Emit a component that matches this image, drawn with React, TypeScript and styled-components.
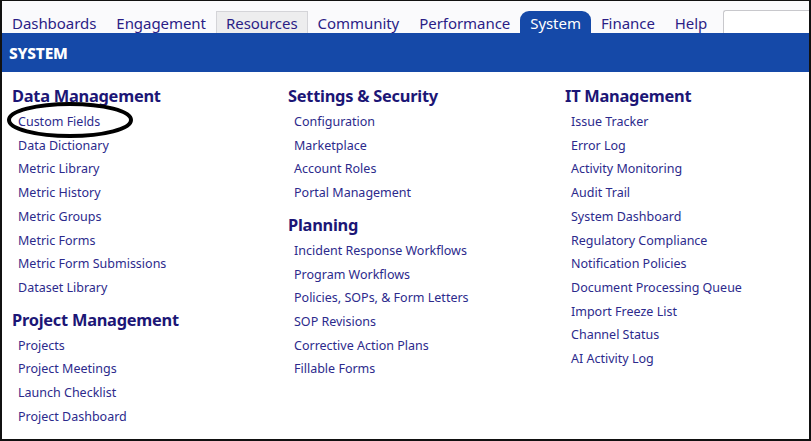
import * as React from 'react';
import styled, { createGlobalStyle } from 'styled-components';

const GlobalStyle = createGlobalStyle`
    html, body {
        margin: 0;
        padding: 0;
        background: #ffffff;
    }
    body {
        font-family: "Noto Sans", "Open Sans", sans-serif;
    }
`;

const Frame = styled.div`
    position: relative;
    width: 811px;
    height: 441px;
    box-sizing: border-box;
    border-style: solid;
    border-color: #111111;
    border-width: 1px 2px 2px 2px;
    background: #ffffff;
    overflow: hidden;
`;

const TopNav = styled.div`
    display: flex;
    align-items: flex-end;
    height: 32px;
    background: #fafafc;
`;

const NavTab = styled.div<{ $state?: 'hover' | 'active' }>`
    height: 22px;
    box-sizing: border-box;
    padding: 1px 9px 0;
    font-size: 15px;
    line-height: 21px;
    color: ${p => (p.$state === 'active' ? '#ffffff' : '#2b1d86')};
    background: ${p =>
        p.$state === 'active' ? '#1549a8' : p.$state === 'hover' ? '#ededee' : 'transparent'};
    border: 1px solid ${p => (p.$state === 'hover' ? '#d4d4d8' : 'transparent')};
    border-bottom: none;
    border-radius: ${p => (p.$state === 'active' ? '9px 9px 0 0' : '0')};
    white-space: nowrap;
    letter-spacing: -0.05px;
    user-select: none;
`;

const Search = styled.input`
    margin-left: 6px;
    flex: 1;
    height: 23px;
    box-sizing: border-box;
    border: 1px solid #c8c8cc;
    border-right: none;
    border-bottom: none;
    border-radius: 3px 0 0 0;
    background: #ffffff;
    outline: none;
`;

const Banner = styled.div`
    height: 39px;
    display: flex;
    align-items: center;
    padding-left: 7px;
    background: #1549a8;
    color: #ffffff;
    font-size: 15.5px;
    font-weight: 800;
    letter-spacing: -0.2px;
`;

const Columns = styled.div`
    display: grid;
    grid-template-columns: 276px 277px 1fr;
    padding: 11px 0 0 10px;
`;

const Column = styled.div`
    display: flex;
    flex-direction: column;
`;

const Heading = styled.div<{ $first?: boolean }>`
    font-size: 16.4px;
    font-weight: 700;
    line-height: 26px;
    color: #1c1676;
    margin-top: ${p => (p.$first ? '0' : '7px')};
    margin-bottom: 1px;
    letter-spacing: -0.25px;
`;

const Item = styled.a`
    display: block;
    padding-left: 6px;
    font-size: 12.5px;
    line-height: 23.7px;
    color: #2c2a8c;
    text-decoration: none;
    white-space: nowrap;
    cursor: pointer;
`;

const Circle = styled.svg`
    position: absolute;
    left: 2px;
    top: 99px;
    width: 134px;
    height: 40px;
    pointer-events: none;
`;

interface ISection {
    title: string;
    items: string[];
}

const columns: ISection[][] = [
    [
        {
            title: 'Data Management',
            items: [
                'Custom Fields',
                'Data Dictionary',
                'Metric Library',
                'Metric History',
                'Metric Groups',
                'Metric Forms',
                'Metric Form Submissions',
                'Dataset Library'
            ]
        },
        {
            title: 'Project Management',
            items: ['Projects', 'Project Meetings', 'Launch Checklist', 'Project Dashboard']
        }
    ],
    [
        {
            title: 'Settings & Security',
            items: ['Configuration', 'Marketplace', 'Account Roles', 'Portal Management']
        },
        {
            title: 'Planning',
            items: [
                'Incident Response Workflows',
                'Program Workflows',
                'Policies, SOPs, & Form Letters',
                'SOP Revisions',
                'Corrective Action Plans',
                'Fillable Forms'
            ]
        }
    ],
    [
        {
            title: 'IT Management',
            items: [
                'Issue Tracker',
                'Error Log',
                'Activity Monitoring',
                'Audit Trail',
                'System Dashboard',
                'Regulatory Compliance',
                'Notification Policies',
                'Document Processing Queue',
                'Import Freeze List',
                'Channel Status',
                'AI Activity Log'
            ]
        }
    ]
];

const tabs: { label: string; state?: 'hover' | 'active' }[] = [
    { label: 'Dashboards' },
    { label: 'Engagement' },
    { label: 'Resources', state: 'hover' },
    { label: 'Community' },
    { label: 'Performance' },
    { label: 'System', state: 'active' },
    { label: 'Finance' },
    { label: 'Help' }
];

export default function App() {
    return (
        <>
            <GlobalStyle />
            <Frame>
                <TopNav>
                    {tabs.map(t => (
                        <NavTab key={t.label} $state={t.state}>
                            {t.label}
                        </NavTab>
                    ))}
                    <Search type="text" />
                </TopNav>
                <Banner>SYSTEM</Banner>
                <Columns>
                    {columns.map((col, ci) => (
                        <Column key={ci}>
                            {col.map((sec, si) => (
                                <React.Fragment key={sec.title}>
                                    <Heading $first={si === 0}>{sec.title}</Heading>
                                    {sec.items.map(it => (
                                        <Item key={it}>{it}</Item>
                                    ))}
                                </React.Fragment>
                            ))}
                        </Column>
                    ))}
                </Columns>
                {/* hand-drawn annotation around the first link */}
                <Circle viewBox="0 0 134 40">
                    <ellipse cx="66" cy="20" rx="61" ry="16" fill="none" stroke="#000" strokeWidth="4" />
                </Circle>
            </Frame>
        </>
    );
}
